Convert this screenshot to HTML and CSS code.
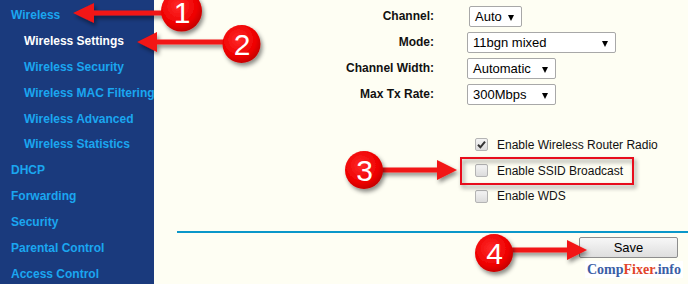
FILE: index.html
```html
<!DOCTYPE html>
<html lang="en">
<head>
<meta charset="utf-8">
<title>Wireless Settings</title>
<link rel="stylesheet" href="styles.css">
</head>
<body>
<div class="page">
  <nav class="sidebar">
    <ul class="menu">
      <li class="menu-item">Wireless</li>
      <li class="menu-item sub active">Wireless Settings</li>
      <li class="menu-item sub">Wireless Security</li>
      <li class="menu-item sub">Wireless MAC Filtering</li>
      <li class="menu-item sub">Wireless Advanced</li>
      <li class="menu-item sub">Wireless Statistics</li>
      <li class="menu-item">DHCP</li>
      <li class="menu-item">Forwarding</li>
      <li class="menu-item">Security</li>
      <li class="menu-item">Parental Control</li>
      <li class="menu-item">Access Control</li>
    </ul>
  </nav>
  <main class="content">
    <div class="form">
      <div class="label">Channel:</div>
      <div class="field"><div class="select sel-channel">Auto</div></div>
      <div class="label">Mode:</div>
      <div class="field"><div class="select sel-mode">11bgn mixed</div></div>
      <div class="label">Channel Width:</div>
      <div class="field"><div class="select sel-width">Automatic</div></div>
      <div class="label">Max Tx Rate:</div>
      <div class="field"><div class="select sel-width">300Mbps</div></div>
    </div>
    <div class="checks">
      <div class="check"><span class="box checked"><svg viewBox="0 0 13 13" width="13" height="13"><path d="M3 6.8 L5.4 9.3 L10 3.6" fill="none" stroke="#333" stroke-width="2"/></svg></span>Enable Wireless Router Radio</div>
      <div class="check"><span class="box"></span>Enable SSID Broadcast</div>
      <div class="check"><span class="box"></span>Enable WDS</div>
    </div>
    <div class="divider"></div>
    <div class="footer">
      <button class="btn">Save</button>
      <div class="watermark"><span class="wm-blue">Comp</span><span class="wm-red">Fixer</span><span class="wm-blue">.info</span></div>
    </div>
  </main>
  <svg class="annotations" viewBox="0 0 688 284" width="688" height="284">
    <defs>
      <radialGradient id="ball" cx="0.42" cy="0.38" r="0.65">
        <stop offset="0" stop-color="#ff2a2a"/>
        <stop offset="0.7" stop-color="#ee0000"/>
        <stop offset="1" stop-color="#c20000"/>
      </radialGradient>
      <filter id="shadow" x="-30%" y="-30%" width="170%" height="170%">
        <feDropShadow dx="2" dy="3" stdDeviation="2.2" flood-color="#000" flood-opacity="0.45"/>
      </filter>
    </defs>
    <g filter="url(#shadow)" fill="#f21414">
      <polygon points="73,13 94,3 94,10.5 165,10.5 165,15.5 94,15.5 94,23"/>
      <polygon points="137,42 157,32 157,39.5 230,39.5 230,44.5 157,44.5 157,52"/>
      <polygon points="457,170 437,160 437,167.5 370,167.5 370,172.5 437,172.5 437,180"/>
      <polygon points="587,250 567,240 567,247.5 500,247.5 500,252.5 567,252.5 567,260"/>
      <rect x="461" y="158" width="172" height="26" fill="none" stroke="#e8101a" stroke-width="2"/>
    </g>
    <g filter="url(#shadow)" fill="url(#ball)">
      <circle cx="181.5" cy="11" r="20.5"/>
      <circle cx="241.5" cy="44" r="19"/>
      <circle cx="364" cy="170" r="19"/>
      <circle cx="494" cy="253" r="19"/>
    </g>
    <g class="num">
      <text x="182" y="23">1</text>
      <text x="242" y="54.5">2</text>
      <text x="364.5" y="181">3</text>
      <text x="494.5" y="264">4</text>
    </g>
  </svg>
</div>
</body>
</html>
```

FILE: styles.css
```css
* { box-sizing: border-box; }
html, body { margin: 0; padding: 0; }
body {
  width: 688px;
  height: 284px;
  overflow: hidden;
  background: #fefef3;
  font-family: "Liberation Sans", Arial, sans-serif;
}
.page {
  position: relative;
  display: grid;
  grid-template-columns: 154px 1fr;
  width: 688px;
  height: 284px;
}
.sidebar {
  background: #1a3a7d;
  height: 284px;
  overflow: hidden;
}
.menu {
  list-style: none;
  margin: 0;
  padding: 3px 0 0 0;
}
.menu-item {
  height: 25.9px;
  line-height: 25.9px;
  padding-left: 11px;
  font-size: 12px;
  font-weight: bold;
  color: #1aa6f0;
  white-space: nowrap;
}
.menu-item.sub { padding-left: 24px; }
.menu-item.active { color: #ffffff; }

.content {
  padding: 3px 0 0 23px;
  display: flex;
  flex-direction: column;
}
.form {
  display: grid;
  grid-template-columns: 257px 1fr;
  column-gap: 33px;
  grid-auto-rows: 26px;
  align-items: center;
}
.label {
  text-align: right;
  font-size: 12px;
  font-weight: bold;
  color: #111;
}
.field { display: flex; align-items: center; }
.select {
  position: relative;
  height: 21px;
  line-height: 19px;
  border: 1px solid #a8a8a8;
  border-radius: 2px;
  background: #fff;
  padding-left: 5px;
  font-size: 13px;
  color: #000;
}
.select::after {
  content: "";
  position: absolute;
  right: 7px;
  top: 8px;
  border-left: 3px solid transparent;
  border-right: 3px solid transparent;
  border-top: 6px solid #000;
}
.sel-channel { width: 53px; margin-left: 2px; }
.sel-mode { width: 149px; }
.sel-width { width: 89px; }

.checks {
  margin-top: 25px;
  padding-left: 294px;
  display: flex;
  flex-direction: column;
}
.check {
  height: 25.8px;
  display: flex;
  align-items: center;
  font-size: 12px;
  color: #111;
  white-space: nowrap;
}
.box {
  width: 13px;
  height: 13px;
  margin-left: 4px;
  margin-right: 9px;
  border: 1px solid #b4b4b4;
  border-radius: 2px;
  background: linear-gradient(#f4f4f4, #dcdcdc);
  display: flex;
}
.box svg { margin: -1px; }
.divider {
  margin-top: 22px;
  height: 2px;
  background: #0b97c9;
}
.footer {
  display: flex;
  flex-direction: column;
  align-items: flex-end;
  padding-right: 10px;
}
.btn {
  margin-top: 4px;
  width: 99px;
  height: 21px;
  padding: 0;
  border: 1px solid #8d8d8d;
  border-radius: 2px;
  background: linear-gradient(#f7f7f7, #dedede);
  font-family: "Liberation Sans", Arial, sans-serif;
  font-size: 13px;
  color: #000;
}
.watermark {
  margin-top: 3px;
  margin-right: -5px;
  padding: 1px 2px;
  background: #ffffff;
  font-family: "Liberation Serif", "Times New Roman", serif;
  font-weight: bold;
  font-size: 14px;
  line-height: 15px;
}
.wm-blue { color: #3b5ea6; }
.wm-red { color: #e2452a; }

.annotations {
  position: absolute;
  left: 0;
  top: 0;
  pointer-events: none;
}
.num text {
  fill: #fff;
  font-family: "Liberation Sans", Arial, sans-serif;
  font-size: 30px;
  text-anchor: middle;
}
```
